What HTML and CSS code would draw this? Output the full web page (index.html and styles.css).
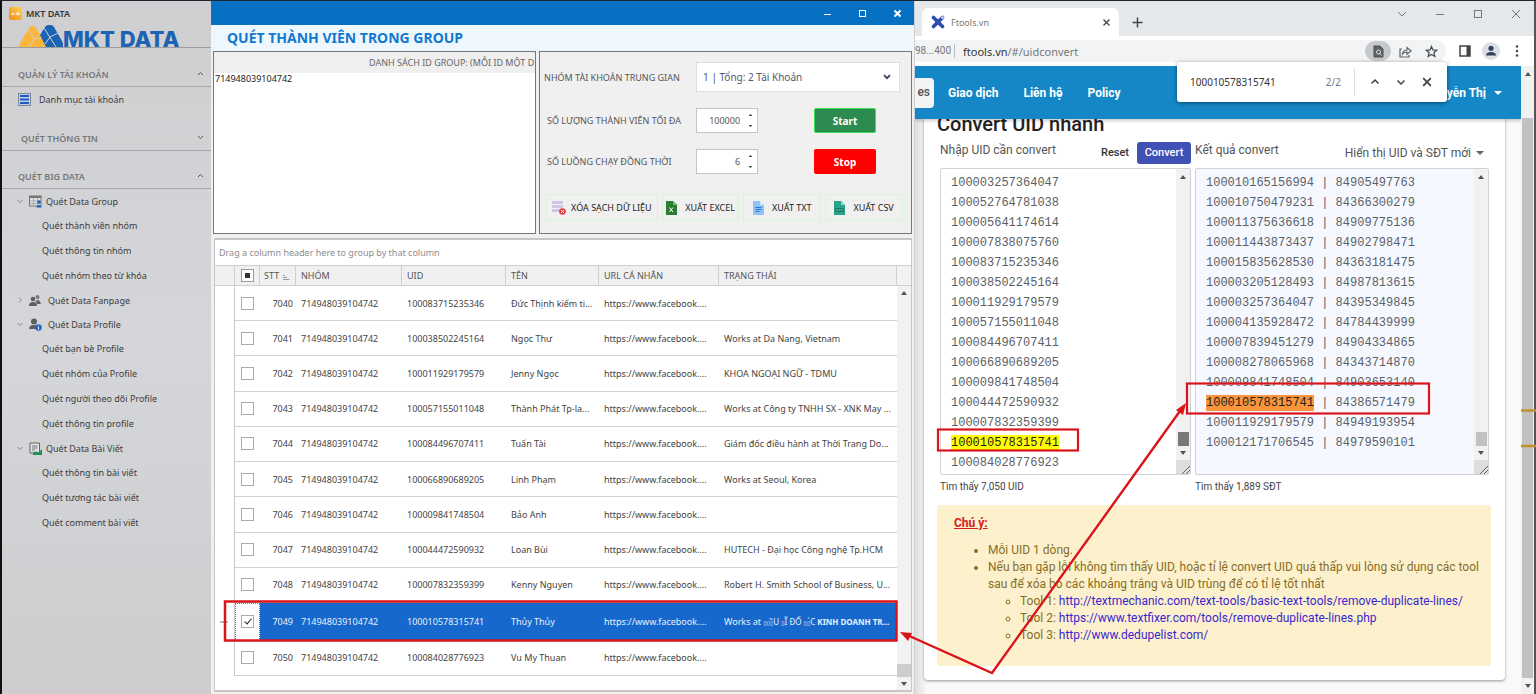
FILE: index.html
```html
<!DOCTYPE html>
<html lang="vi">
<head>
<meta charset="utf-8">
<title>MKT DATA</title>
<link rel="stylesheet" href="styles.css">
</head>
<body>
<div class="desktop">
  <aside class="sidebar">
    <div class="app-name">
      <svg width="13" height="13" viewBox="0 0 13 13"><defs><linearGradient id="ai" x1="0" y1="1" x2="1" y2="0"><stop offset="0" stop-color="#f08a12"/><stop offset="1" stop-color="#fbd35a"/></linearGradient></defs><rect width="13" height="13" rx="2" fill="url(#ai)"/><path d="M1.500 8 L4 5 L6 8Z M6.500 8 L8 5 L9 5 L11.500 8Z" fill="#fff" opacity=".75"/></svg>
      MKT DATA
    </div>
    <div class="brand">
      <svg width="44" height="22" viewBox="0 0 44 22"><path d="M0 22 C0 19 2 17 3 15 L10 3 C11 0 16 0 17 3 L25 17 C26 19 27 20 27 22Z" fill="#fbb43c"/><path d="M9 4 L15 14 L10 22 M15 14 L22 13" fill="none" stroke="#d0d0d3" stroke-width="1"/><path d="M21 10 L26 2 C28 -1 33 -1 35 2 L43 16 C44 18 45 20 44 22 L27 22Z" fill="#1d63b4"/><path d="M25 3 L37 22 M31 12 L26 19 M31 12 L39 8" fill="none" stroke="#d0d0d3" stroke-width="1"/></svg>
      <span>MKT DATA</span>
    </div>
    <button class="section s1">QUẢN LÝ TÀI KHOẢN <svg width="7" height="5" viewBox="0 0 7 5"><path d="M1 4 L3.500 1.500 L6 4"/></svg></button>
    <a class="account" href="#">
      <svg width="13" height="13" viewBox="0 0 13 13"><rect x=".5" y=".5" width="12" height="12" fill="#c3cfe4" stroke="#7b8696"/><path d="M2 3H11 M2 6.500H11 M2 10H11" stroke="#1d5bc0" stroke-width="2"/></svg>
      Danh mục tài khoản
    </a>
    <button class="section s2"><span>QUÉT THÔNG TIN</span> <svg width="7" height="5" viewBox="0 0 7 5"><path d="M1 1 L3.500 3.500 L6 1"/></svg></button>
    <button class="section s3">QUÉT BIG DATA <svg width="7" height="5" viewBox="0 0 7 5"><path d="M1 4 L3.500 1.500 L6 4"/></svg></button>
    <nav class="tree">
      <a class="parent" href="#"><svg class="tw" width="6" height="6" viewBox="0 0 6 6"><path d="M.5 2 L3 4.500 L5.500 2"/></svg><svg width="14" height="13" viewBox="0 0 14 13"><rect x=".5" y="1" width="11.500" height="10" fill="#dfe1e4" stroke="#777"/><path d="M0 2H12.500" stroke="#777" stroke-width="2"/><path d="M4.500 3V11 M8.500 3V11 M1 6H12 M1 8.500H12" stroke="#999" stroke-width=".7"/><circle cx="10" cy="7" r="1.800" fill="#2061c4"/><path d="M7 12.500 Q10 7 13 12.500Z" fill="#2061c4"/></svg>Quét Data Group</a>
      <a href="#">Quét thành viên nhóm</a>
      <a href="#">Quét thông tin nhóm</a>
      <a href="#">Quét nhóm theo từ khóa</a>
      <a class="parent wide" href="#"><svg class="tw" width="6" height="6" viewBox="0 0 6 6"><path d="M2 .5 L4.500 3 L2 5.500"/></svg><svg width="14" height="13" viewBox="0 0 14 13"><g fill="#777"><circle cx="8.500" cy="3" r="2"/><path d="M6 8 Q8.500 3.500 11.500 8Z"/></g><g fill="#5c5e62"><circle cx="4" cy="5" r="2.300"/><path d="M0 12 Q0 8 4 8 T8 12Z"/><path d="M7 8 H11 L12 10 H8Z"/></g></svg>Quét Data Fanpage</a>
      <a class="parent wide" href="#"><svg class="tw" width="6" height="6" viewBox="0 0 6 6"><path d="M.5 2 L3 4.500 L5.500 2"/></svg><svg width="14" height="13" viewBox="0 0 14 13"><g fill="#5c5e62"><circle cx="5" cy="3.500" r="3"/><path d="M0 11 Q0 7 5 7 Q9 7 9 11Z"/></g><circle cx="9.500" cy="9.500" r="3.200" fill="#2061c4"/><path d="M9.500 7.500V8.300 M9.500 9V11.500" stroke="#fff"/></svg>Quét Data Profile</a>
      <a href="#">Quét bạn bè Profile</a>
      <a href="#">Quét nhóm của Profile</a>
      <a href="#">Quét người theo dõi Profile</a>
      <a href="#">Quét thông tin profile</a>
      <a class="parent" href="#"><svg class="tw" width="6" height="6" viewBox="0 0 6 6"><path d="M.5 2 L3 4.500 L5.500 2"/></svg><svg width="14" height="13" viewBox="0 0 14 13"><path d="M1 1H10.500V11H1Z" fill="#dfe1e3" stroke="#666"/><path d="M3 4H8.500 M3 6H8.500 M3 8H6" stroke="#777"/><path d="M4 13 L4 10.500 L7 9.500 L9.500 10.500 L13 7 V13Z" fill="#209050"/></svg>Quét Data Bài Viết</a>
      <a href="#">Quét thông tin bài viết</a>
      <a href="#">Quét tương tác bài viết</a>
      <a href="#">Quét comment bài viết</a>
    </nav>
  </aside>

  <main class="app">
    <header class="titlebar">
      <button aria-label="Minimize"><svg width="9" height="9" viewBox="0 0 9 9"><path d="M1 5.500H8"/></svg></button>
      <button aria-label="Maximize"><svg width="9" height="9" viewBox="0 0 9 9"><rect x="1.500" y="1.500" width="6" height="6"/></svg></button>
      <button aria-label="Close"><svg width="9" height="9" viewBox="0 0 9 9"><path class="bold" d="M1.500 1.500L7.500 7.500M7.500 1.500L1.500 7.500"/></svg></button>
    </header>
    <h1 class="page-title">QUÉT THÀNH VIÊN TRONG GROUP</h1>
    <div class="panels">
      <section class="id-panel">
        <label for="ids">DANH SÁCH ID GROUP: (MỖI ID MỘT D</label>
        <textarea id="ids" spellcheck="false">714948039104742</textarea>
      </section>
      <section class="options">
        <div class="form">
          <label for="mid">NHÓM TÀI KHOẢN TRUNG GIAN</label>
          <div class="combo"><select id="mid"><option>1 | Tổng: 2 Tài Khoản</option></select><svg width="8" height="6" viewBox="0 0 8 6"><path d="M1 1.200 L4 4.200 L7 1.200" fill="none" stroke="#333f55" stroke-width="1.800"/></svg></div>
          <label class="in" for="max">SỐ LƯỢNG THÀNH VIÊN TỐI ĐA</label>
          <div class="spin"><input id="max" type="number" value="100000"><svg width="5" height="15" viewBox="0 0 5 15"><path d="M.5 3 L2.500 1 L4.500 3Z M.5 12 L2.500 14 L4.500 12Z"/></svg></div>
          <button class="run start">Start</button>
          <label class="in" for="thr">SỐ LUỒNG CHẠY ĐỒNG THỜI</label>
          <div class="spin"><input id="thr" type="number" value="6"><svg width="5" height="15" viewBox="0 0 5 15"><path d="M.5 3 L2.500 1 L4.500 3Z M.5 12 L2.500 14 L4.500 12Z"/></svg></div>
          <button class="run stop">Stop</button>
        </div>
        <div class="exports">
          <button class="clear"><svg width="14" height="15" viewBox="0 0 14 15"><path d="M0 1H11V12H0Z" fill="#cfc6e3"/><path d="M0 4.500H11M0 8.500H11" stroke="#f1f1f1"/><circle cx="10.500" cy="11.500" r="3.300" fill="#e23b3b"/><path d="M9 10L12 13M12 10L9 13" stroke="#fff"/></svg>XÓA SẠCH DỮ LIỆU</button>
          <button><svg width="11" height="14" viewBox="0 0 11 14"><path d="M0 0H7L11 4V14H0Z" fill="#2b7d32"/><path d="M7 0V4H11Z" fill="#7cb97f"/><path d="M3.500 6.500L7 11M7 6.500L3.500 11" stroke="#fff"/></svg>XUẤT EXCEL</button>
          <button><svg width="11" height="14" viewBox="0 0 11 14"><path d="M0 0H7L11 4V14H0Z" fill="#8fc3f5"/><path d="M7 0V4H11Z" fill="#d8ebfc"/><path d="M2.500 6.500H8.500M2.500 8.500H8.500M2.500 10.500H6.500" stroke="#2478d4"/></svg>XUẤT TXT</button>
          <button><svg width="11" height="14" viewBox="0 0 11 14"><path d="M0 0H7L11 4V14H0Z" fill="#2aa58c"/><path d="M7 0V4H11Z" fill="#90d6c6"/><path d="M1 7H10V11H1Z" fill="#137c68"/><path d="M2 9H4M5 9H6.500M7.500 9H9" stroke="#8fd8c8"/></svg>XUẤT CSV</button>
        </div>
      </section>
    </div>

    <section class="grid">
      <p class="group-hint">Drag a column header here to group by that column</p>
      <div class="grid-body">
        <table>
          <colgroup><col class="c0"><col class="c1"><col class="c2"><col class="c3"><col class="c4"><col class="c5"><col class="c6"><col></colgroup>
          <thead><tr><th></th><th class="ck"><span class="mixed"><i></i></span></th><th>STT <svg width="7" height="7" viewBox="0 0 7 7"><path d="M0 1.500H2M0 3.500H4M0 5.500H6.500" stroke="#999"/></svg></th><th>NHÓM</th><th>UID</th><th>TÊN</th><th>URL CÁ NHÂN</th><th>TRẠNG THÁI</th></tr></thead>
          <tbody>
            <tr><td></td><td class="ck"><input type="checkbox" aria-label="7040"></td><td class="n">7040</td><td>714948039104742</td><td>100083715235346</td><td>Đức Thịnh kiếm ti...</td><td>https://www.facebook....</td><td></td></tr>
            <tr><td></td><td class="ck"><input type="checkbox" aria-label="7041"></td><td class="n">7041</td><td>714948039104742</td><td>100038502245164</td><td>Ngọc Thư</td><td>https://www.facebook....</td><td>Works at Da Nang, Vietnam</td></tr>
            <tr><td></td><td class="ck"><input type="checkbox" aria-label="7042"></td><td class="n">7042</td><td>714948039104742</td><td>100011929179579</td><td>Jenny Ngọc</td><td>https://www.facebook....</td><td>KHOA NGOẠI NGỮ - TDMU</td></tr>
            <tr><td></td><td class="ck"><input type="checkbox" aria-label="7043"></td><td class="n">7043</td><td>714948039104742</td><td>100057155011048</td><td>Thành Phát Tp-la...</td><td>https://www.facebook....</td><td>Works at Công ty TNHH SX - XNK May ...</td></tr>
            <tr><td></td><td class="ck"><input type="checkbox" aria-label="7044"></td><td class="n">7044</td><td>714948039104742</td><td>100084496707411</td><td>Tuấn Tài</td><td>https://www.facebook....</td><td>Giám đốc điều hành at Thời Trang Do...</td></tr>
            <tr><td></td><td class="ck"><input type="checkbox" aria-label="7045"></td><td class="n">7045</td><td>714948039104742</td><td>100066890689205</td><td>Linh Phạm</td><td>https://www.facebook....</td><td>Works at Seoul, Korea</td></tr>
            <tr><td></td><td class="ck"><input type="checkbox" aria-label="7046"></td><td class="n">7046</td><td>714948039104742</td><td>100009841748504</td><td>Bảo Anh</td><td>https://www.facebook....</td><td></td></tr>
            <tr><td></td><td class="ck"><input type="checkbox" aria-label="7047"></td><td class="n">7047</td><td>714948039104742</td><td>100044472590932</td><td>Loan Bùi</td><td>https://www.facebook....</td><td>HUTECH - Đại học Công nghệ Tp.HCM</td></tr>
            <tr><td></td><td class="ck"><input type="checkbox" aria-label="7048"></td><td class="n">7048</td><td>714948039104742</td><td>100007832359399</td><td>Kenny Nguyen</td><td>https://www.facebook....</td><td>Robert H. Smith School of Business, U...</td></tr>
            <tr class="sel"><td></td><td class="ck"><input type="checkbox" aria-label="7049" checked></td><td class="n">7049</td><td>714948039104742</td><td>100010578315741</td><td>Thủy Thủy</td><td>https://www.facebook....</td><td>Works at <span class="fancy"><span class="boxes">▯▯▯</span>̃U <span class="boxes">▯</span>Ĩ ĐỐ <span class="boxes">▯▯</span>́C <b>KINH DOANH TR...</b></span></td></tr>
            <tr><td></td><td class="ck"><input type="checkbox" aria-label="7050"></td><td class="n">7050</td><td>714948039104742</td><td>100084028776923</td><td>Vu My Thuan</td><td>https://www.facebook....</td><td></td></tr>
          </tbody>
        </table>
        <div class="vscroll"><span class="corner"></span><svg width="6" height="4" viewBox="0 0 6 4"><path d="M0 4 L3 0 L6 4Z"/></svg><i></i><svg width="6" height="4" viewBox="0 0 6 4"><path d="M0 0 L3 4 L6 0Z"/></svg></div>
      </div>
    </section>
  </main>

  <section class="browser">
    <div class="tabs">
      <div class="tab"><svg width="14" height="14" viewBox="0 0 14 14"><path d="M2.500 2.500L11.500 11.500M11.500 2.500L2.500 11.500" stroke="#2d4fae" stroke-width="3.600" stroke-linecap="round"/><circle cx="7" cy="7" r="3" fill="#2d4fae"/><circle cx="11.500" cy="2.500" r="1.500" fill="#b9cdf0"/></svg><span>Ftools.vn</span><button aria-label="Close tab"><svg width="9" height="9" viewBox="0 0 9 9"><path d="M1.500 1.500L7.500 7.500M7.500 1.500L1.500 7.500" stroke="#444" stroke-width="1.300"/></svg></button></div>
      <button class="new" aria-label="New tab"><svg width="11" height="11" viewBox="0 0 11 11"><path d="M5.500 .5V10.500M.5 5.500H10.500" stroke="#444" stroke-width="1.500"/></svg></button>
      <div class="winbtns">
        <button aria-label="Search tabs"><svg width="10" height="10" viewBox="0 0 10 10"><path d="M1 3L5 7L9 3"/></svg></button>
        <button aria-label="Minimize"><svg width="10" height="10" viewBox="0 0 10 10"><path d="M1 5.500H9"/></svg></button>
        <button aria-label="Maximize"><svg width="10" height="10" viewBox="0 0 10 10"><rect x="1.500" y="1.500" width="7" height="7"/></svg></button>
        <button aria-label="Close"><svg width="10" height="10" viewBox="0 0 10 10"><path d="M1 1L9 9M9 1L1 9"/></svg></button>
      </div>
    </div>
    <div class="toolbar">
      <div class="omni">
        <span class="ext">98...400</span><span class="url">ftools.vn<em>/#/uidconvert</em></span>
        <button class="pill" aria-label="Find"><svg width="11" height="13" viewBox="0 0 11 13"><path d="M1 1H7L10 4V12H1Z" fill="#5f6368" stroke="#4a4d52"/><circle cx="5.500" cy="7" r="2" fill="none" stroke="#ddd"/><path d="M7 8.500L8.500 10.500" stroke="#ddd"/></svg></button>
        <button aria-label="Share"><svg width="13" height="13" viewBox="0 0 13 13"><path d="M3 4H1V12H10V10M3.500 9Q4 5 8 5V2.500L12 6L8 9.200V7Q5 7 3.500 9Z" fill="none" stroke="#5f6368" stroke-width="1.200"/></svg></button>
        <button aria-label="Bookmark"><svg width="13" height="13" viewBox="0 0 13 13"><path d="M6.500 1.500L8 5L11.800 5.300L8.900 7.800L9.800 11.500L6.500 9.500L3.200 11.500L4.100 7.800L1.200 5.300L5 5Z" fill="none" stroke="#4a4d52" stroke-width="1.300"/></svg></button>
      </div>
      <button aria-label="Side panel"><svg width="12" height="12" viewBox="0 0 12 12"><rect x="1" y="1" width="10" height="10" fill="none" stroke="#444" stroke-width="1.500"/><path d="M7.500 1H11V11H7.500Z" fill="#444"/></svg></button>
      <button class="me" aria-label="Profile"><svg width="18" height="18" viewBox="0 0 18 18"><circle cx="9" cy="9" r="9" fill="#dcdfe6"/><circle cx="9" cy="6.300" r="2.600" fill="#34415c"/><path d="M4 13.500Q4 10 9 10T14 13.500Z" fill="#34415c"/></svg></button>
      <button aria-label="Menu"><svg width="4" height="12" viewBox="0 0 4 12"><circle cx="2" cy="1.500" r="1.200"/><circle cx="2" cy="6" r="1.200"/><circle cx="2" cy="10.500" r="1.200"/></svg></button>
    </div>
    <div class="viewport">
      <div class="doc">
        <nav class="sitebar"><a class="on" href="#">es</a><a href="#">Giao dịch</a><a href="#">Liên hệ</a><a href="#">Policy</a><a class="user" href="#">Nguyễn Thị <svg width="8" height="4" viewBox="0 0 8 4"><path d="M0 0H8L4 4Z" fill="#fff"/></svg></a></nav>
        <div class="card">
          <h2>Convert UID nhanh</h2>
          <div class="cols">
            <div class="col">
              <div class="colhead"><label for="src">Nhập UID cần convert</label><button class="reset">Reset</button><button class="convert">Convert</button></div>
              <div class="box">
                <textarea id="src" spellcheck="false">100003257364047
100052764781038
100005641174614
100007838075760
100083715235346
100038502245164
100011929179579
100057155011048
100084496707411
100066890689205
100009841748504
100044472590932
100007832359399
100010578315741
100084028776923</textarea>
                <div class="bar dark"><svg width="6" height="4" viewBox="0 0 6 4"><path d="M0 4 L3 0 L6 4Z"/></svg><i></i><svg width="6" height="4" viewBox="0 0 6 4"><path d="M0 0 L3 4 L6 0Z"/></svg><b><svg width="8" height="8" viewBox="0 0 8 8"><path d="M0 8L8 0M4 8L8 4" stroke="#666"/></svg></b></div>
                <mark class="hit yellow">100010578315741</mark>
              </div>
              <p class="found">Tìm thấy 7,050 UID</p>
            </div>
            <div class="col right">
              <div class="colhead"><label for="out">Kết quả convert</label><button class="mode">Hiển thị UID và SĐT mới <svg width="8" height="4" viewBox="0 0 8 4"><path d="M0 0H8L4 4Z" fill="#666"/></svg></button></div>
              <div class="box blue">
                <textarea id="out" spellcheck="false" readonly>100010165156994 | 84905497763
100010750479231 | 84366300279
100011375636618 | 84909775136
100011443873437 | 84902798471
100015835628530 | 84363181475
100003205128493 | 84987813615
100003257364047 | 84395349845
100004135928472 | 84784439999
100007839451279 | 84904334865
100008278065968 | 84343714870
100009841748504 | 84903653140
100010578315741 | 84386571479
100011929179579 | 84949193954
100012171706545 | 84979590101</textarea>
                <div class="bar"><svg width="6" height="4" viewBox="0 0 6 4"><path d="M0 4 L3 0 L6 4Z"/></svg><i></i><svg width="6" height="4" viewBox="0 0 6 4"><path d="M0 0 L3 4 L6 0Z"/></svg><b><svg width="8" height="8" viewBox="0 0 8 8"><path d="M0 8L8 0M4 8L8 4" stroke="#666"/></svg></b></div>
                <mark class="hit orange">100010578315741</mark>
              </div>
              <p class="found">Tìm thấy 1,889 SĐT</p>
            </div>
          </div>
          <div class="note">
            <strong>Chú ý:</strong>
            <ul>
              <li>Mỗi UID 1 dòng.</li>
              <li>Nếu bạn gặp lỗi không tìm thấy UID, hoặc tỉ lệ convert UID quá thấp vui lòng sử dụng các tool sau để xóa bỏ các khoảng trắng và UID trùng để có tỉ lệ tốt nhất
                <ul>
                  <li>Tool 1: <a href="#">http://textmechanic.com/text-tools/basic-text-tools/remove-duplicate-lines/</a></li>
                  <li>Tool 2: <a href="#">https://www.textfixer.com/tools/remove-duplicate-lines.php</a></li>
                  <li>Tool 3: <a href="#">http://www.dedupelist.com/</a></li>
                </ul>
              </li>
            </ul>
          </div>
        </div>
      </div>
      <div class="pagebar"><svg width="6" height="4" viewBox="0 0 6 4"><path d="M0 4 L3 0 L6 4Z"/></svg><i></i><svg width="6" height="4" viewBox="0 0 6 4"><path d="M0 0 L3 4 L6 0Z"/></svg></div>
    </div>
    <div class="find">
      <input type="text" aria-label="Find in page" value="100010578315741"><span>2/2</span>
      <div class="find-btns">
        <button aria-label="Previous"><svg width="10" height="10" viewBox="0 0 10 10"><path d="M1.500 6.500L5 3L8.500 6.500"/></svg></button>
        <button aria-label="Next"><svg width="10" height="10" viewBox="0 0 10 10"><path d="M1.500 3.500L5 7L8.500 3.500"/></svg></button>
        <button aria-label="Close"><svg width="10" height="10" viewBox="0 0 10 10"><path d="M1.200 1.200L8.800 8.800M8.800 1.200L1.200 8.800" stroke-width="1.800"/></svg></button>
      </div>
    </div>
  </section>

  <svg class="marks" viewBox="0 0 1536 694" preserveAspectRatio="none">
    <path d="M1521 410.500H1536M1521 446H1536" stroke="#c2922c" stroke-width="2.500" fill="none"/>
    <path d="M220 622H228" stroke="#777" fill="none"/>
    <g fill="none" stroke="#d9141b">
      <rect x="225" y="601.500" width="671.500" height="39" stroke-width="2.500"/>
      <rect x="938" y="429.500" width="140" height="21" stroke-width="2.200"/>
      <rect x="1187" y="383.500" width="242" height="30" stroke-width="2.200"/>
      <path d="M906 634.500L992 673L1180 411" stroke-width="2.400"/>
    </g>
    <path d="M900 632L912 633L908 641Z M1186 403L1183 415L1176 410Z" fill="#d9141b"/>
  </svg>
</div>
</body>
</html>
```

FILE: styles.css
```css
* { box-sizing: border-box; }
body { margin: 0; font-family: "Noto Sans", "Open Sans", sans-serif; font-size: 9px; color: #444; background: #fff; }
button { font: inherit; color: inherit; background: none; border: 0; padding: 0; margin: 0; display: inline-flex; align-items: center; justify-content: center; }
input, select, textarea { font: inherit; color: inherit; margin: 0; border: 0; padding: 0; outline: 0; background: none; border-radius: 0; min-width: 0; }
textarea { resize: none; overflow: hidden; display: block; white-space: pre; }
a { color: inherit; text-decoration: none; }
h1, h2, p, ul { margin: 0; }
svg { flex: none; }

.desktop { position: relative; display: grid; grid-template-columns: 211px minmax(0, 704fr) minmax(0, 621fr); height: 100vh; min-height: 694px; overflow: hidden; border-top: 1px solid #20242b; }

/* sidebar */
.sidebar { border-left: 2px solid #111; background: linear-gradient(#cfcfd1, #d4d6d9 50%, #cdcdcf); display: flex; flex-direction: column; color: #3c3c3e; }
.app-name { display: flex; align-items: center; gap: 4px; height: 24px; padding-left: 7px; font-weight: 600; color: #333; }
.brand { display: flex; align-items: flex-start; height: 23px; padding-left: 17px; border-bottom: 1px solid #9d9d9f; color: #1d63b4; font: 800 22px/28px Inter, sans-serif; }
.section { justify-content: space-between; flex: none; align-items: flex-end; height: 24px; padding: 0 7px 4px 16px; border-bottom: 1px solid #a6a6a8; font-weight: 600; color: #77777a; line-height: 14px; }
.section svg { margin-bottom: 6px; fill: none; stroke: #555; }
.section span { padding-left: 3px; }
.s1 { margin-top: 15px; }
.s2 { margin-top: 16px; }
.s3 { margin-top: 14px; }
.account { display: flex; align-items: center; gap: 8px; height: 24px; padding-left: 16px; }
.tree { display: flex; flex-direction: column; }
.tree a { display: flex; align-items: center; height: 25px; padding-left: 40px; }
.tree .parent { height: 24px; padding-left: 15px; gap: 3px; }
.tree .tw { margin-right: 3px; fill: none; stroke: #888; }
.tree .wide { gap: 5px; }
.tree .wide .tw { margin-right: 1px; }

/* scraper window */
.app { background: #f0f0f0; display: flex; flex-direction: column; min-width: 0; border-right: 1px solid #cfcfcf; padding-bottom: 2px; }
.titlebar { display: flex; justify-content: flex-end; align-items: center; height: 24px; padding-right: 12px; gap: 26px; background: #0670c2; }
.titlebar svg { fill: none; stroke: #fff; }
.titlebar .bold { stroke-width: 2; }
.page-title { height: 26px; padding-left: 16px; background: #eff7fe; font-size: 14px; line-height: 26px; font-weight: 700; color: #1277cf; }
.panels { display: grid; grid-template-columns: minmax(0, 324fr) minmax(0, 374fr); gap: 3px; padding: 0 2px; height: 183px; }
.id-panel, .options { border: 1px solid #77777a; min-width: 0; }
.id-panel { display: flex; flex-direction: column; overflow: hidden; }
.id-panel label { height: 21px; padding-left: 155px; line-height: 21px; white-space: nowrap; color: #666; background: #f0eff0; }
.id-panel textarea { flex: 1; background: #fff; padding: 0 1px; line-height: 12px; color: #222; }
.options { display: flex; flex-direction: column; padding: 10px 8px 10px 4px; }
.form { display: grid; grid-template-columns: 152px 118px 62px; grid-template-rows: 30px 25px 25px; row-gap: 16px; align-items: center; color: #555; }
.form label { white-space: nowrap; }
.form .in { padding-left: 3px; }
.combo { grid-column: 2 / 4; width: 204px; height: 30px; display: flex; align-items: center; background: #fff; border: 1px solid #dcdee2; padding: 0 8px 0 6px; font-size: 10px; color: #4d5a70; }
.combo select { flex: 1; appearance: none; }
.spin { width: 62px; height: 25px; display: flex; align-items: center; gap: 8px; background: #fff; border: 1px solid #c4c4c4; padding: 0 4px; }
.spin input { flex: 1; width: 0; text-align: right; appearance: textfield; -moz-appearance: textfield; }
.spin input::-webkit-inner-spin-button { appearance: none; }
.spin svg { fill: #444; }
.run { height: 25px; border-radius: 2px; color: #fff; font-size: 10px; font-weight: 700; }
.start { background: #2c8b50; border: 1px solid #3ddb4f; }
.stop { background: #f00; }
.exports { display: grid; grid-template-columns: 112fr 78fr 78fr 78fr; gap: 4px; margin: 20px 0 0 2px; color: #222; }
.exports button { height: 27px; gap: 8px; border: 1px solid #d8f3d8; white-space: nowrap; min-width: 0; }
.exports .clear { gap: 5px; }

.grid { flex: 1; min-height: 0; display: flex; flex-direction: column; margin: 4px 2px 0 3px; background: #fff; border: 1px solid #c6c6c6; border-top-width: 2px; border-bottom-width: 2px; }
.group-hint { height: 25px; padding-left: 4px; line-height: 25px; color: #8d8d8d; }
.grid-body { flex: 1; min-height: 0; display: grid; grid-template-columns: minmax(0, 1fr) 14px; }
table { width: 100%; height: calc(100% - 14px); table-layout: fixed; border-collapse: separate; border-spacing: 0; }
.c0 { width: 20px; } .c1 { width: 25px; } .c2 { width: 36px; } .c3 { width: 106px; } .c4 { width: 104px; } .c5 { width: 93px; } .c6 { width: 120px; }
th, td { padding: 0 0 0 5px; text-align: left; font-weight: 400; white-space: nowrap; overflow: hidden; }
th { height: 21px; background: #f0f0f1; border: solid #cfcfcf; border-width: 1px 1px 1px 0; color: #555; }
th:nth-child(3) { padding-left: 4px; }
th svg { vertical-align: -2px; margin-left: 2px; }
td { border-bottom: 1px solid #d2d2d2; }
td:first-child { border-right: 1px solid #c9c9c9; border-bottom: 0; }
.ck { padding: 0; text-align: center; line-height: 0; }
.ck input { appearance: none; position: relative; width: 13px; height: 13px; border: 1px solid #a8aab0; background: #fff; display: inline-block; vertical-align: middle; }
.ck input:checked::after { content: ""; position: absolute; left: 4px; top: 1px; width: 3px; height: 6px; border: solid #222; border-width: 0 1px 1px 0; transform: rotate(40deg); }
.mixed { display: inline-flex; align-items: center; justify-content: center; width: 13px; height: 13px; border: 1px solid #999; background: #fff; vertical-align: middle; }
.mixed i { width: 5px; height: 5px; background: #333; }
.n { text-align: right; padding: 0 3px 0 0; }
.sel td:nth-child(n+3) { background: #1668cd; color: #e8f0fb; }
.sel td.ck { border: 1px dotted #777; }
.fancy { font-size: 8px; }
.boxes { font-family: "DejaVu Sans", sans-serif; font-size: 6px; }
.vscroll { display: flex; flex-direction: column; align-items: center; background: #f2f2f2; padding-bottom: 4px; }
.vscroll .corner { height: 21px; align-self: stretch; border: solid #cfcfcf; border-width: 1px 0; margin-bottom: 5px; }
.vscroll svg, .bar svg, .pagebar svg { fill: #555; }
.vscroll i { margin-top: auto; margin-bottom: 5px; width: 100%; height: 13px; background: #cdcdcd; }

/* browser window */
.browser { position: relative; display: flex; flex-direction: column; min-width: 0; border-right: 2px solid #555; background: #f8f8f8; }
.tabs { display: flex; align-items: center; height: 35px; background: #e5e8ea; padding: 0 13px 0 7px; }
.tab { align-self: flex-end; display: flex; align-items: center; gap: 6px; width: 197px; height: 28px; padding: 0 8px 0 9px; background: #fff; border-radius: 6px 6px 0 0; color: #777; }
.tab button { margin-left: auto; }
.new { margin: 7px 0 0 13px; }
.winbtns { margin: 0 0 10px auto; display: flex; gap: 28px; }
.winbtns svg { fill: none; stroke: #777; }
.toolbar { display: flex; align-items: center; height: 30px; padding-right: 15px; background: #fff; fill: #444; }
.omni { flex: 1; display: flex; align-items: center; height: 22px; margin-right: 13px; padding-right: 8px; background: #f1f3f4; border-radius: 0 11px 11px 0; gap: 13px; font-size: 11px; color: #777; }
.ext { flex: none; border-right: 1px solid #bbb; padding-right: 3px; margin-right: -5px; font: 10px/14px Roboto, sans-serif; }
.url { color: #333; margin-right: auto; }
.url em { font-style: normal; color: #777; }
.pill { width: 26px; height: 20px; border-radius: 10px; background: #c6c8ca; margin-right: -5px; }
.me { margin: 0 15px 0 11px; }

.viewport { flex: 1; min-height: 0; display: grid; grid-template-columns: minmax(0, 1fr) 13px; }
.doc { font-family: Roboto, "Noto Sans", sans-serif; background: linear-gradient(90deg, #dedede, #f9f9f9 12px); overflow: hidden; }
.sitebar { position: relative; display: flex; align-items: center; height: 53px; background: #1687c6; color: #fff; font-size: 12px; font-weight: 700; box-shadow: 0 2px 3px #0003; }
.sitebar a { margin-right: 25px; }
.sitebar .on { background: #f3f4f6; color: #555; width: 19px; height: 30px; line-height: 28px; padding-right: 4px; border-radius: 0 4px 4px 0; margin-right: 14px; display: flex; justify-content: flex-end; font-weight: 500; }
.sitebar .user { margin: 0 19px 0 auto; display: flex; align-items: center; gap: 8px; }
.card { margin: -8px 16px 0 9px; padding: 0 14px 14px 13px; background: #fff; border-radius: 4px; box-shadow: 0 1px 3px #0006; }
h2 { font-size: 20px; font-weight: 500; line-height: 26px; color: #222; }
.cols { display: grid; grid-template-columns: minmax(0, 251fr) minmax(0, 294fr); gap: 4px; padding: 0 2px 0 3px; }
.colhead { display: flex; align-items: center; height: 31px; font-size: 12px; color: #555; white-space: nowrap; }
.colhead label { margin: 0 auto 6px 0; }
.reset { font-size: 11px; font-weight: 500; color: #333; margin-right: 8px; }
.convert { width: 54px; height: 22px; border-radius: 3px; background: #3f51b5; color: #fff; font-size: 11px; font-weight: 500; }
.mode { gap: 5px; margin-right: 5px; }
.box { position: relative; display: flex; height: 307px; border: 1px solid #cfd2d6; border-radius: 2px; background: #fff; }
.box textarea { flex: 1; padding: 4px 0 0 10px; font: 12px/20px "Liberation Mono", monospace; color: #5c6066; }
.blue { background: #f5f9ff; }
.bar { width: 14px; display: flex; flex-direction: column; align-items: center; padding-top: 6px; background: #f1f1f1; }
.bar i { width: 11px; height: 14px; margin: auto 0 5px; background: #c1c1c1; }
.bar.dark i { background: #787878; }
.bar b { display: flex; align-items: flex-end; justify-content: flex-end; width: 14px; height: 14px; margin-top: 5px; background: #ddd; }
.hit { position: absolute; left: 10px; color: #222; font: 12px/16px "Liberation Mono", monospace; }
.yellow { top: 266px; background: #ff0; }
.orange { top: 226px; background: #fb953b; }
.found { font-size: 10px; line-height: 24px; color: #444; }
.note { margin-top: 6px; padding: 10px 6px 22px 17px; min-height: 160px; background: #fdf1cd; border-radius: 3px; color: #876d25; font-size: 12px; line-height: 17px; }
.note strong { display: block; color: #d8201e; text-decoration: underline; margin-bottom: 10px; }
.note ul { padding-left: 34px; }
.note ul ul { padding-left: 32px; }
.note a { color: #3a26cf; }
.pagebar { display: flex; flex-direction: column; align-items: center; padding: 6px 0; background: #f1f1f1; }
.pagebar i { flex: 1; align-self: stretch; margin: 42px 1px 6px; background: #c1c1c1; }

.find { position: absolute; right: 87px; top: 61px; width: 270px; height: 40px; display: flex; align-items: center; background: #fff; border-radius: 3px; box-shadow: 0 1px 4px #0007; color: #777; padding: 0 15px 0 13px; font-size: 10px; }
.find input { flex: 1; color: #333; }
.find-btns { display: flex; gap: 16px; margin-left: 13px; padding-left: 15px; height: 28px; border-left: 1px solid #ddd; }
.find svg { fill: none; stroke: #444; stroke-width: 1.5; }

/* red callouts laid over both windows */
.marks { position: absolute; inset: -1px 0 0; width: 100%; height: calc(100% + 1px); pointer-events: none; }
```
